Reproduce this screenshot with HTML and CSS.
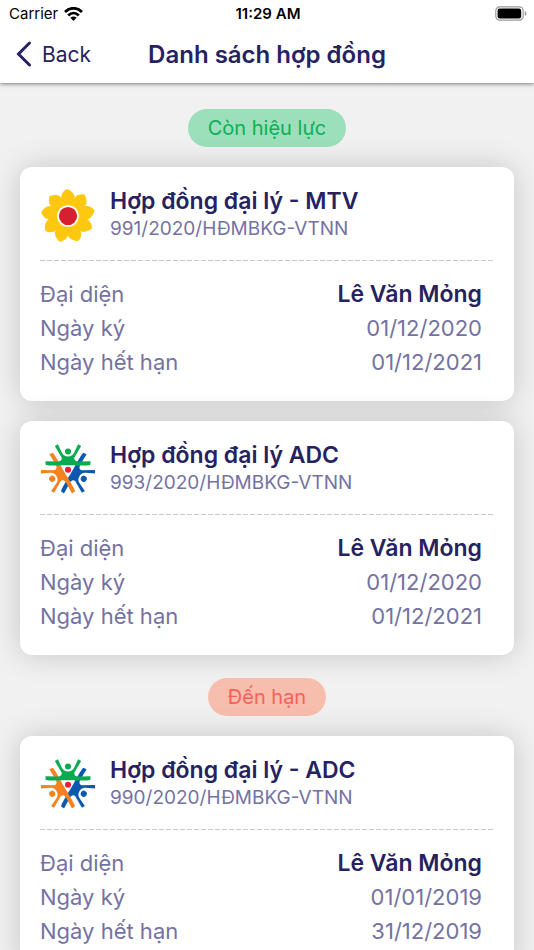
FILE: index.html
```html
<!DOCTYPE html>
<html lang="vi">

<head>
    <meta charset="UTF-8">
    <meta name="viewport" content="width=device-width, initial-scale=1.0">
    <title>Danh sách hợp đồng</title>
    <link rel="stylesheet" href="styles.css">
</head>

<body>
    <!-- shared logos -->
    <svg class="sprite" aria-hidden="true">
        <symbol id="logo-mtv" viewBox="-80 -80 160 160">
            <defs>
                <path id="petal" fill="#fdc80f" d="M-3 -80 C8 -76 19 -67 20 -56 C20 -46 14 -34 8 -22 L-8 -22 C-14 -34 -20 -46 -20 -56 C-19 -68 -12 -76 -3 -80 Z" />
            </defs>
            <circle r="42" fill="#fdc80f" />
            <use href="#petal" />
            <use href="#petal" transform="rotate(40)" />
            <use href="#petal" transform="rotate(80)" />
            <use href="#petal" transform="rotate(120)" />
            <use href="#petal" transform="rotate(160)" />
            <use href="#petal" transform="rotate(200)" />
            <use href="#petal" transform="rotate(240)" />
            <use href="#petal" transform="rotate(280)" />
            <use href="#petal" transform="rotate(320)" />
            <circle r="32" fill="#fff" />
            <circle r="27" fill="#d7202f" />
        </symbol>
        <symbol id="logo-adc" viewBox="-80 -79 160 160">
            <defs>
                <g id="person">
                    <circle cx="0" cy="-54" r="9" />
                    <path d="M-39 -70 L-30 -75 L-18 -50 C-14 -42 -8 -39 0 -39 C8 -39 14 -42 18 -50 L30 -75 L39 -70 L19 -36 C17 -27 24 -24 34 -24 L67 -25 L66 -14 C50 -11 18 -13 0 -13 C-18 -13 -50 -11 -66 -14 L-67 -25 L-34 -24 C-24 -24 -17 -27 -19 -36 Z" />
                </g>
            </defs>
            <use href="#person" fill="#0b58b0" transform="rotate(120)" />
            <use href="#person" fill="#f58220" transform="rotate(240)" />
            <use href="#person" fill="#0aaa50" />
            <circle r="9" fill="#ec1940" />
        </symbol>
    </svg>

    <header class="header">
        <div class="status-bar">
            <div class="carrier">
                <span>Carrier</span>
                <svg class="wifi" viewBox="0 0 19 14" aria-hidden="true">
                    <path fill="none" stroke="#000" stroke-width="2.8" d="M1 5 C6 0 13 0 18 5 M4.2 8.4 C7.4 5.3 11.6 5.3 14.8 8.4" />
                    <path d="M6.4 10.8 C8.3 9 10.7 9 12.6 10.8 L9.5 14 Z" />
                </svg>
            </div>
            <span class="time">11:29 AM</span>
            <svg class="battery" viewBox="0 0 32 15" aria-hidden="true">
                <rect x="0.8" y="0.8" width="27.4" height="13.4" rx="4" fill="none" stroke="#999" stroke-width="1.2" />
                <rect x="2.6" y="2.6" width="23.6" height="9.8" rx="2.2" />
                <path fill="#999" d="M29.8 5 C32 6 32 9 29.8 10 Z" />
            </svg>
        </div>
        <nav class="nav-bar">
            <button class="back" type="button">
                <svg class="chevron" viewBox="0 0 16 26" aria-hidden="true">
                    <path fill="none" stroke="#262262" stroke-width="3" stroke-linecap="round" d="M13.5 2 L2.5 13 L13.5 24" />
                </svg>
                <span>Back</span>
            </button>
            <h1>Danh sách hợp đồng</h1>
        </nav>
    </header>

    <main class="list">
        <h2 class="tag tag-active">Còn hiệu lực</h2>

        <article class="card">
            <div class="card-head">
                <svg class="logo" aria-hidden="true"><use href="#logo-mtv" /></svg>
                <div>
                    <h3>Hợp đồng đại lý - MTV</h3>
                    <p class="code">991/2020/HĐMBKG-VTNN</p>
                </div>
            </div>
            <dl class="info">
                <div class="row"><dt>Đại diện</dt><dd class="name">Lê Văn Mỏng</dd></div>
                <div class="row"><dt>Ngày ký</dt><dd>01/12/2020</dd></div>
                <div class="row"><dt>Ngày hết hạn</dt><dd>01/12/2021</dd></div>
            </dl>
        </article>

        <article class="card">
            <div class="card-head">
                <svg class="logo" aria-hidden="true"><use href="#logo-adc" /></svg>
                <div>
                    <h3>Hợp đồng đại lý ADC</h3>
                    <p class="code">993/2020/HĐMBKG-VTNN</p>
                </div>
            </div>
            <dl class="info">
                <div class="row"><dt>Đại diện</dt><dd class="name">Lê Văn Mỏng</dd></div>
                <div class="row"><dt>Ngày ký</dt><dd>01/12/2020</dd></div>
                <div class="row"><dt>Ngày hết hạn</dt><dd>01/12/2021</dd></div>
            </dl>
        </article>

        <h2 class="tag tag-expired">Đến hạn</h2>

        <article class="card">
            <div class="card-head">
                <svg class="logo" aria-hidden="true"><use href="#logo-adc" /></svg>
                <div>
                    <h3>Hợp đồng đại lý - ADC</h3>
                    <p class="code">990/2020/HĐMBKG-VTNN</p>
                </div>
            </div>
            <dl class="info">
                <div class="row"><dt>Đại diện</dt><dd class="name">Lê Văn Mỏng</dd></div>
                <div class="row"><dt>Ngày ký</dt><dd>01/01/2019</dd></div>
                <div class="row"><dt>Ngày hết hạn</dt><dd>31/12/2019</dd></div>
            </dl>
        </article>
    </main>
</body>

</html>
```
FILE: styles.css
```css
* {
    box-sizing: border-box;
}

html {
    scrollbar-width: none;
}

body {
    margin: 0;
    font-family: Inter, Roboto, sans-serif;
    background-color: #f1f1f1;
    color: #262262;
}

h1, h2, h3, p, dl, dd {
    margin: 0;
}

.sprite {
    display: block;
    width: 0;
    height: 0;
}

/* header */
.header {
    position: relative;
    background-color: #fff;
    box-shadow: 0 1px 4px rgba(0, 0, 0, 0.5);
}

.status-bar {
    display: grid;
    grid-template-columns: 1fr auto 1fr;
    align-items: center;
    height: 27px;
    padding: 0 7px 0 9px;
    font-size: 15px;
    color: #000;
}

.carrier {
    display: flex;
    align-items: center;
    gap: 6px;
}

.wifi {
    width: 19px;
    height: 14px;
}

.time {
    font-weight: 600;
}

.battery {
    width: 32px;
    height: 15px;
    justify-self: end;
}

.nav-bar {
    display: grid;
    grid-template-columns: 1fr auto 1fr;
    align-items: center;
    height: 56px;
    padding: 0 16px 2px;
}

.nav-bar h1 {
    font-size: 24px;
    font-weight: 600;
}

.back {
    display: flex;
    align-items: center;
    gap: 10px;
    padding: 0;
    border: none;
    background: none;
    font-family: inherit;
    font-size: 21px;
    color: #262262;
    cursor: pointer;
}

.chevron {
    width: 16px;
    height: 26px;
}

/* list */
.list {
    display: flex;
    flex-direction: column;
    gap: 20px;
    padding: 26px 20px;
}

.tag {
    align-self: center;
    padding: 0 20px;
    border-radius: 20px;
    font-size: 20px;
    font-weight: 400;
    line-height: 38px;
}

.tag-active {
    background-color: #9bdfbb;
    color: #0fae57;
}

.tag-expired {
    margin-top: 3px;
    background-color: #f7bdad;
    color: #f9605c;
}

.card {
    padding: 18px 20px 22px;
    border-radius: 12px;
    background-color: #fff;
    box-shadow: 0 0 30px rgba(0, 0, 0, 0.18);
}

.card-head {
    display: flex;
    align-items: center;
    gap: 15px;
    padding: 0 0 18px 1px;
    /* dashes */
    background: repeating-linear-gradient(to right, #c8c8d0 0 5px, #fff 5px 7px) bottom / 100% 1px no-repeat;
}

.logo {
    width: 54px;
    height: 54px;
    margin-top: 4px;
}

.card-head h3 {
    font-size: 23px;
    font-weight: 600;
    line-height: 30px;
}

.code {
    font-size: 19px;
    line-height: 26px;
    color: #7472a3;
}

.info {
    padding: 16px 12px 0 0;
}

.row {
    display: flex;
    justify-content: space-between;
    font-size: 22px;
    line-height: 34px;
    color: #7472a3;
}

.name {
    font-size: 23px;
    font-weight: 600;
    color: #262262;
}
```
